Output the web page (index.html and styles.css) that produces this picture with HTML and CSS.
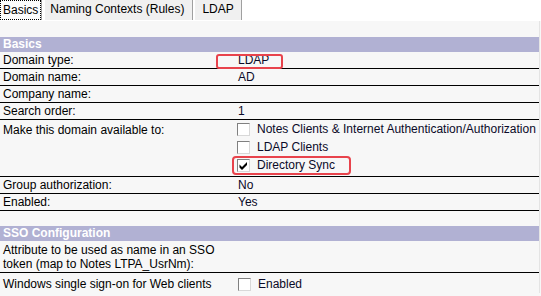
FILE: index.html
```html
<!DOCTYPE html>
<html>
<head>
<meta charset="utf-8">
<link rel="stylesheet" href="styles.css">
</head>
<body>
<div class="page">
  <div class="tabs">
    <div class="tab active"><span class="focus">Basics</span></div>
    <div class="tab">Naming Contexts (Rules)</div>
    <div class="tab">LDAP</div>
  </div>
  <div class="content">
    <div class="band">Basics</div>
    <div class="row"><div class="label">Domain type:</div><div class="value"><span class="hl hl-ldap">LDAP</span></div></div>
    <div class="row"><div class="label">Domain name:</div><div class="value">AD</div></div>
    <div class="row"><div class="label">Company name:</div><div class="value"></div></div>
    <div class="row"><div class="label">Search order:</div><div class="value">1</div></div>
    <div class="row multi">
      <div class="label">Make this domain available to:</div>
      <div class="value checks">
        <div class="check"><span class="box"></span>Notes Clients &amp; Internet Authentication/Authorization</div>
        <div class="check"><span class="box"></span>LDAP Clients</div>
        <div class="check hl-sync"><span class="box"><svg width="11" height="11" viewBox="0 0 11 11"><polygon points="1.5,4.5 4,7 9,2 9,5 4,10 1.5,7.5" fill="#000"/></svg></span>Directory Sync</div>
      </div>
    </div>
    <div class="row"><div class="label">Group authorization:</div><div class="value">No</div></div>
    <div class="row"><div class="label">Enabled:</div><div class="value">Yes</div></div>
    <div class="band band2">SSO Configuration</div>
    <div class="row tall"><div class="label">Attribute to be used as name in an SSO token (map to Notes LTPA_UsrNm):</div><div class="value"></div></div>
    <div class="row last"><div class="label">Windows single sign-on for Web clients</div><div class="value"><div class="check"><span class="box"></span>Enabled</div></div></div>
  </div>
</div>
</body>
</html>
```
FILE: styles.css
```css
*, *::before, *::after { box-sizing: border-box; }
html, body { margin: 0; padding: 0; }
body {
  font-family: "Liberation Sans", Arial, sans-serif;
  font-size: 12px;
  color: #000;
  background: #f7f7f7;
  width: 541px;
  height: 296px;
  overflow: hidden;
}
.page { width: 541px; }
.tabs {
  display: flex;
  height: 21px;
  background: #fff;
  border-bottom: 1px solid #fff;
}
.tab {
  height: 20px;
  line-height: 19px;
  padding: 0 7px;
  background: #f0f0f0;
  border-left: 1px solid #fff;
  border-right: 1px solid #a0a0a0;
  margin-right: 1px;
  color: #000;
}
.tab:nth-child(2) { padding: 0 8px 0 5px; margin-left: 1px; }
.tab.active {
  background: #fcfcfc;
  padding: 0;
  border-left: none;
  border-right: 1px solid #a0a0a0;
}
.focus {
  display: block;
  height: 20px;
  padding: 0 2px;
  border: 1px dotted #000;
  line-height: 18px;
}
.content {
  padding-top: 16px;
  width: 540px;
  border-right: 1px solid #e4e4e4;
}
.band {
  height: 15px;
  line-height: 15px;
  background: #b1b1d3;
  color: #fff;
  font-weight: bold;
  padding-left: 3px;
}
.band2 { margin-top: 15px; }
.row {
  display: grid;
  grid-template-columns: 237px 1fr;
  height: 17px;
  line-height: 16px;
  border-bottom: 1px solid #000;
}
.label { padding-left: 3px; }
.value { position: relative; padding-left: 1px; color: #0a0a28; }
.row.multi { height: 57px; }
.row.multi .label { padding-top: 2px; }
.checks { padding-left: 0; }
.check {
  position: relative;
  display: flex;
  align-items: center;
  height: 18px;
  color: #0a0a28;
}
.box {
  width: 13px;
  height: 13px;
  margin-right: 7px;
  background: #fff;
  border-top: 1px solid #808080;
  border-left: 1px solid #808080;
  border-right: 1px solid #d8d8d8;
  border-bottom: 1px solid #d8d8d8;
  display: flex;
  align-items: center;
  justify-content: center;
}
.hl { position: relative; }
.hl-ldap::after {
  content: "";
  position: absolute;
  left: -22px;
  top: 1px;
  width: 67px;
  height: 15px;
  border: 2px solid #e8434c;
  border-radius: 3px;
}
.hl-sync::after {
  content: "";
  position: absolute;
  left: -5px;
  top: 0;
  width: 119px;
  height: 19px;
  border: 2px solid #e8434c;
  border-radius: 4px;
}
.row.tall { height: 32px; line-height: 14px; }
.row.tall .label { padding-top: 2px; padding-right: 6px; }
.row.last { border-bottom: none; height: 20px; }
.row.last .label { line-height: 22px; }
.row.last .check { height: 22px; }
```
